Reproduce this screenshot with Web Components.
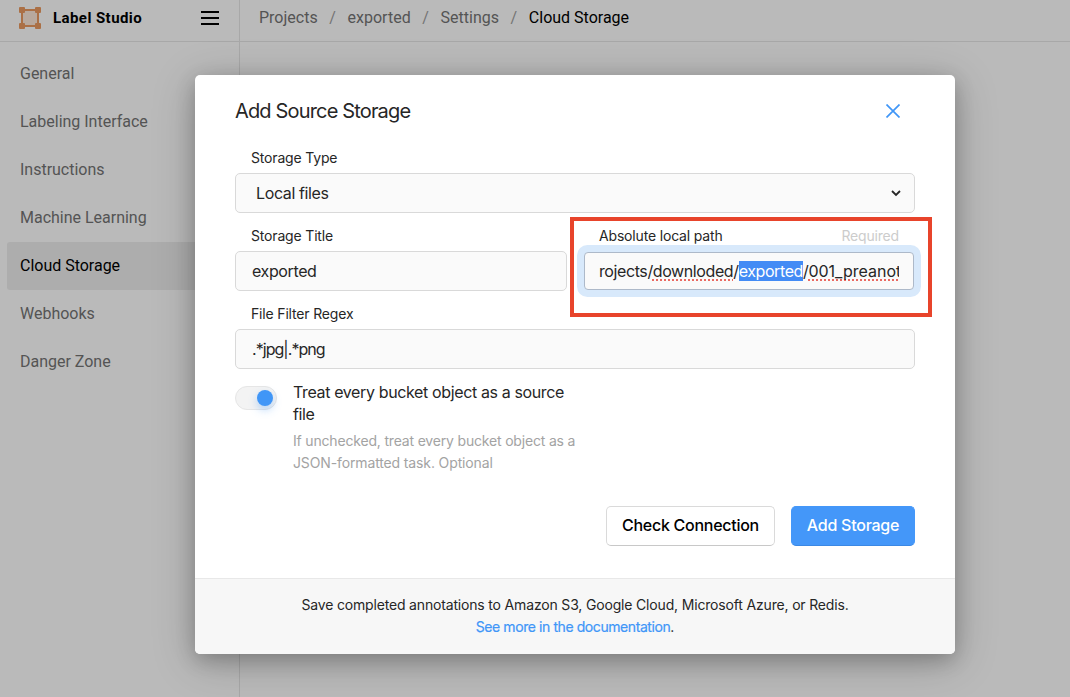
<!DOCTYPE html>
<html lang="en">
<head>
<meta charset="utf-8">
<title>Label Studio</title>
<style>
html,body{margin:0;height:100%;overflow:hidden}
body{font:16px/22px Roboto,"Liberation Sans",sans-serif;background:#bababa}
</style>
</head>
<body>
<studio-app></studio-app>
<script>
const define = (name, html, setup) => customElements.define(name, class extends HTMLElement {
  connectedCallback() {
    if (this.shadowRoot) return;
    const t = document.createElement('template');
    t.innerHTML = '<style>*{box-sizing:border-box}</style>' + html;
    this.attachShadow({mode: 'open'}).append(t.content.cloneNode(true));
    if (setup) setup(this.shadowRoot, this);
  }
});

define('studio-logo', `<style>
:host{display:flex;align-items:center;gap:12px}
span{font-weight:700;font-size:15px;letter-spacing:.43px;color:#000}
svg{display:block}
</style>
<svg width="22" height="22" viewBox="0 0 22 22"><rect x="3" y="3" width="16" height="16" fill="#b8a99e" stroke="#ab7046" stroke-width="2"/><g fill="#ab7046"><rect width="6" height="6" rx="1"/><rect x="16" width="6" height="6" rx="1"/><rect y="16" width="6" height="6" rx="1"/><rect x="16" y="16" width="6" height="6" rx="1"/></g></svg>
<span><slot></slot></span>`);

define('menu-button', `<style>
:host{display:block}svg{display:block}
</style><svg width="18" height="14" viewBox="0 0 18 14"><path d="M0 1h18M0 7h18M0 13h18" stroke="#000" stroke-width="2"/></svg>`);

define('bread-crumbs', `<style>
:host{display:flex;color:#545454;letter-spacing:0}
::slotted(*){white-space:pre}
::slotted(*:not(:last-child))::after{content:"/";margin:0 11.65px;color:#747474}
::slotted(:last-child){color:#000}
</style><slot></slot>`);

define('top-bar', `<style>
:host{display:flex;height:42px;flex:none;border-bottom:1px solid #a8a8a8}
.brand{width:240px;border-right:1px solid #a8a8a8;display:flex;justify-content:space-between;align-items:center;padding:0 20px 5px 19px}
bread-crumbs{padding:7px 0 0 19px}
</style>
<div class="brand"><studio-logo>Label Studio</studio-logo><menu-button></menu-button></div>
<bread-crumbs><span>Projects</span><span>exported</span><span>Settings</span><span>Cloud Storage</span></bread-crumbs>`);

define('nav-item', `<style>
:host{display:flex;align-items:center;height:48px;padding:0 13px 1px;color:#545454;border-radius:3px;letter-spacing:-.01px}
:host([active]){background:#adadad;color:#000}
</style><slot></slot>`);

define('side-nav', `<style>
:host{display:block;width:240px;border-right:1px solid #a8a8a8;padding:8px 7px}
</style>
<nav-item>General</nav-item><nav-item>Labeling Interface</nav-item><nav-item>Instructions</nav-item><nav-item>Machine Learning</nav-item><nav-item active>Cloud Storage</nav-item><nav-item>Webhooks</nav-item><nav-item>Danger Zone</nav-item>`);

define('form-field', `<style>
:host{display:block;min-width:0}
.label{display:flex;justify-content:space-between;padding:0 16px;margin-bottom:4px;font-size:14px;letter-spacing:-.17px}
.note{color:#ccc}
.box{height:40px;border:1px solid #d9d9d9;border-radius:5px;background:#fafafa;padding:0 16px;display:flex;align-items:center;justify-content:space-between}
.clip{overflow:hidden;white-space:nowrap;flex:1;letter-spacing:var(--value-spacing,-.38px)}
:host([select]) .box{padding:0 13px 0 20px}
:host([focused]) .box{height:38px;margin:5px 1px 1px;padding:0 14px;border-color:#adb9c9;border-radius:4px;box-shadow:0 0 0 7px #d8e9fb}
svg{display:none}:host([select]) svg{display:block}
</style>
<div class="label"><span class="name"></span><span class="note"></span></div>
<div class="box"><div class="clip"><slot></slot></div><svg width="10" height="7" viewBox="0 0 10 7"><path d="M1 1l4 4 4-4" fill="none" stroke="#262626" stroke-width="1.8"/></svg></div>`,
(root, host) => {
  root.querySelector('.name').textContent = host.getAttribute('label');
  root.querySelector('.note').textContent = host.getAttribute('note') || '';
});

define('toggle-switch', `<style>
:host{display:block;width:42px;height:24px;flex:none;border-radius:12px;background:#f3f3f3;border:1px solid #e6e6e6;padding:3px}
i{display:block;width:16px;height:16px;border-radius:50%;margin-left:18px;background:#4096f7;box-shadow:0 4px 8px rgba(64,150,247,.35)}
:host{box-sizing:border-box}
</style><i></i>`);

define('action-button', `<style>
:host{display:flex;align-items:center;justify-content:center;box-sizing:border-box;width:169px;height:40px;padding-bottom:2px;border:1px solid #dadada;border-bottom-color:#c8c8c8;border-radius:5px;color:#000;font-weight:500;letter-spacing:-.27px;white-space:nowrap}
:host([primary]){width:124px;background:#4497f9;border-color:#4497f9;border-bottom-color:#3b88e4;color:#fff;letter-spacing:-.25px}
</style><slot></slot>`);

define('storage-dialog', `<style>
:host{display:flex;flex-direction:column;box-sizing:border-box;width:760px;height:579px;border-radius:5px;background:#fff;color:#262626;overflow:visible;box-shadow:0 6px 20px rgba(0,0,0,.2),0 8px 44px rgba(0,0,0,.22);font-family:Inter,"Liberation Sans",sans-serif;position:relative}
header{display:flex;justify-content:space-between;align-items:center;height:72px;padding:0 55px 0 40px;flex:none}
h1{margin:0;font-size:20px;font-weight:400;letter-spacing:-.84px}
svg{display:block}
.fields{display:grid;grid-template-columns:332px 332px;gap:12px 16px;padding:0 40px}
.wide{grid-column:1/-1}
.toggle{display:flex;gap:16px;padding:12px 40px 0}
toggle-switch{margin-top:5px}
.copy{white-space:nowrap;letter-spacing:-.37px}
.hint{font-size:14px;color:#a3a3a3;margin-top:5px;letter-spacing:-.18px}
.hint span{letter-spacing:-.13px}
.actions{display:flex;justify-content:flex-end;gap:16px;padding:0 40px;margin-top:32px}
footer{margin-top:auto;height:76px;background:#f7f7f7;border-top:1px solid #e8e8e8;border-radius:0 0 5px 5px;padding-top:15px;text-align:center;font-size:14px;letter-spacing:-.17px}
a{color:#4096f7;letter-spacing:-.42px;-webkit-text-stroke:.2px #4096f7}
.sel{background:#438bf5;color:#fff}
.sp{text-decoration:underline dotted #ea6a62 2px;text-underline-offset:2px;text-decoration-skip-ink:none}
.tail{letter-spacing:0}
.mark{position:absolute;left:375px;top:142px;width:362px;height:100px;border:4px solid #e8442b}
.path-field{--value-spacing:-.4px}
.regex-field{--value-spacing:-.95px}
</style>
<header><h1>Add Source Storage</h1><svg width="14" height="14" viewBox="0 0 14 14"><path d="M.5.5l13 13M13.5.5l-13 13" stroke="#4096f7" stroke-width="1.7"/></svg></header>
<div class="fields">
<form-field class="wide" label="Storage Type" select>Local files</form-field>
<form-field label="Storage Title">exported</form-field>
<form-field class="path-field" label="Absolute local path" note="Required" focused>rojects/<span class="sp">downloded</span>/<span class="sel">exported</span>/<span class="sp tail">001_preanot</span></form-field>
<form-field class="wide regex-field" label="File Filter Regex">.*jpg|.*png</form-field>
</div>
<div class="toggle"><toggle-switch></toggle-switch><div class="copy">Treat every bucket object as a source<br>file<div class="hint">If unchecked, treat every bucket object as a<br><span>JSON-formatted task. Optional</span></div></div></div>
<div class="actions"><action-button>Check Connection</action-button><action-button primary>Add Storage</action-button></div>
<footer>Save completed annotations to Amazon S3, Google Cloud, Microsoft Azure, or Redis.<br><a>See more in the documentation</a>.</footer>
<div class="mark"></div>`);

define('modal-layer', `<style>
:host{position:absolute;inset:0;display:flex;justify-content:center;align-items:flex-start;padding:75px 0 0 80px;box-sizing:border-box}
</style><slot></slot>`);

define('studio-app', `<style>
:host{display:flex;flex-direction:column;height:697px;width:1070px;position:relative;overflow:hidden}
.main{display:flex;flex:1}
</style>
<top-bar></top-bar><div class="main"><side-nav></side-nav></div>
<modal-layer><storage-dialog></storage-dialog></modal-layer>`);
</script>
</body>
</html>
